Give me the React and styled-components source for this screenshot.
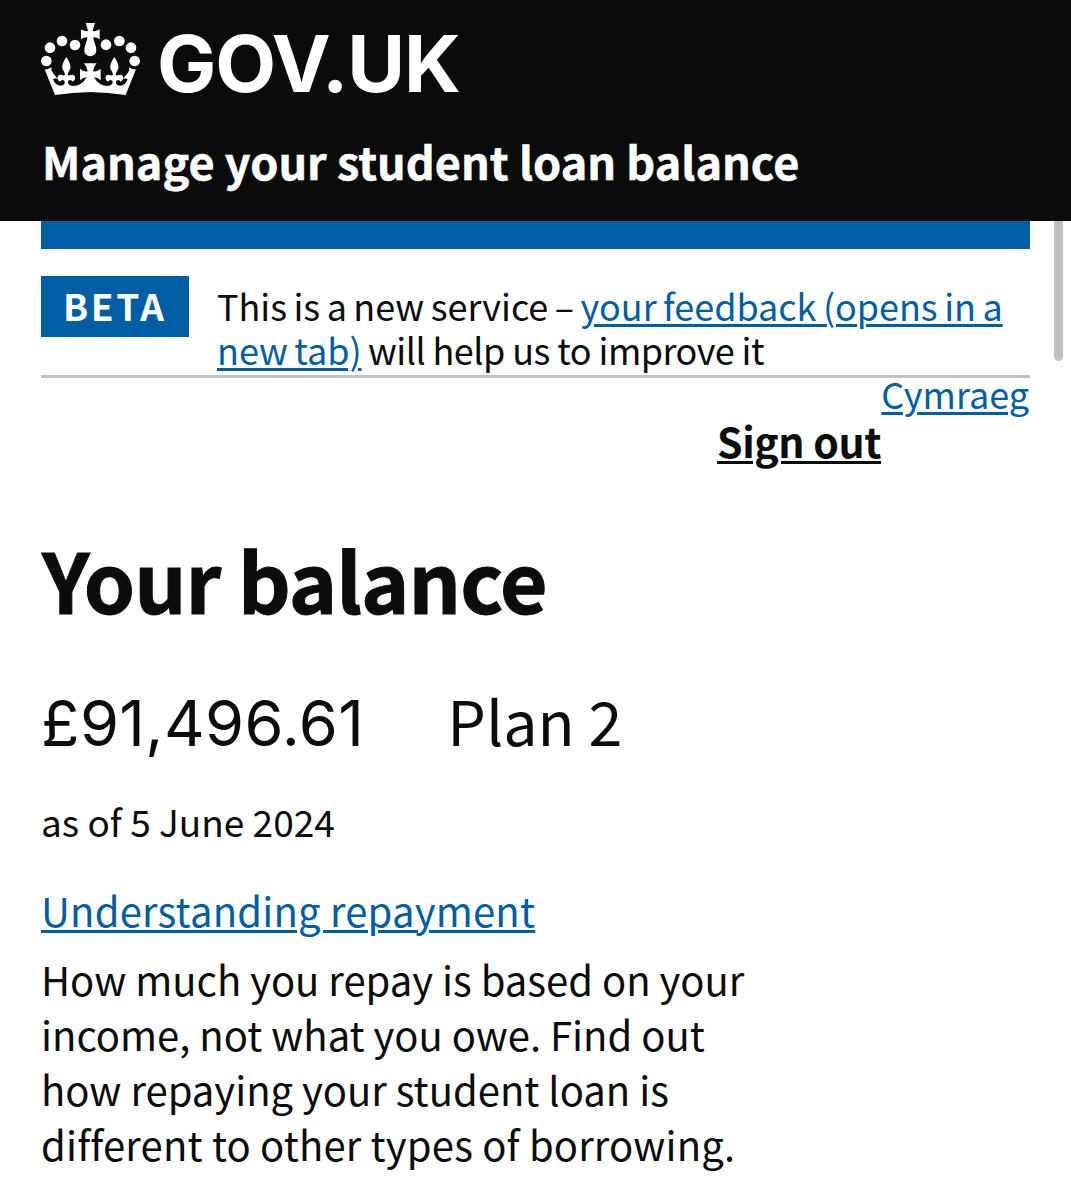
import styled, { createGlobalStyle } from "styled-components";

const GlobalStyle = createGlobalStyle`
  * {
    box-sizing: border-box;
  }
  body {
    margin: 0;
    background: #ffffff;
    color: #0b0c0c;
    font-family: "Noto Sans CJK SC", "Noto Sans", sans-serif;
    font-size: 40px;
    line-height: 55px;
    font-variant-ligatures: none;
  }
  h1, p {
    margin: 0;
  }
`;

const Page = styled.div`
  position: relative;
  height: 1200px;
  overflow: hidden;
`;

const Header = styled.header`
  height: 221px;
  padding: 22px 41px 0;
  background: #0b0b0b;
  color: #ffffff;
`;

const Logo = styled.div`
  display: flex;
  gap: 17px;
  height: 80px;
`;

const CrownIcon = styled.svg`
  display: block;
  width: 99px;
  height: 74px;
`;

const LogoText = styled.span`
  font-family: Inter, sans-serif;
  font-size: 79px;
  font-weight: 700;
  line-height: 83px;
  letter-spacing: -1.1px;
`;

const ServiceName = styled.p`
  padding: 28px 0 0 1px;
  font-size: 45px;
  font-weight: 700;
  line-height: 61px;
  white-space: nowrap;
  -webkit-text-stroke: 0.5px currentColor;
`;

const Scrollbar = styled.div`
  position: absolute;
  top: 221px;
  right: 8px;
  width: 9px;
  height: 140px;
  border-radius: 0 0 5px 5px;
  background: #c0c0c0;
`;

const Container = styled.div`
  margin: 0 41px;
`;

const BlueBar = styled.div`
  height: 28px;
  background: #005ea5;
`;

const PhaseBanner = styled.div`
  display: flex;
  align-items: flex-start;
  gap: 28px;
  height: 129px;
  padding-top: 27px;
  border-bottom: 3px solid #bfc1c3;
`;

const Tag = styled.strong`
  flex: none;
  width: 148px;
  height: 61px;
  padding-left: 22px;
  background: #005ea5;
  color: #ffffff;
  font-size: 37px;
  line-height: 58px;
  letter-spacing: 2.6px;
`;

const PhaseText = styled.p`
  padding-top: 7px;
  font-size: 36px;
  line-height: 44px;
  letter-spacing: -0.05px;
  word-spacing: -1.5px;
  white-space: nowrap;
`;

const Tight = styled.span`
  word-spacing: 0;
  letter-spacing: -0.55px;
`;

const Link = styled.a`
  color: ${(props) => (props.$dark ? "#0b0c0c" : "#005ea5")};
  font-weight: ${(props) => (props.$dark ? 700 : 400)};
  text-decoration: underline;
  text-decoration-thickness: 3px;
  text-underline-offset: 3px;
  letter-spacing: ${(props) => props.$spacing || "inherit"};
`;

const Language = styled.div`
  display: flex;
  justify-content: flex-end;
  height: 44px;
  padding-right: 1px;
  font-size: 36px;
  line-height: 31px;
`;

const SignOut = styled.div`
  display: flex;
  justify-content: flex-end;
  height: 60px;
  padding-right: 149px;
  font-size: 41px;
  line-height: 37px;
`;

const Heading = styled.h1`
  padding: 47px 0 0 1px;
  font-size: 82px;
  font-weight: 700;
  line-height: 100px;
  letter-spacing: -0.95px;
  -webkit-text-stroke: 1px currentColor;
`;

const Balance = styled.div`
  display: flex;
  align-items: baseline;
  gap: 83px;
  height: 134px;
  padding-top: 51px;
  font-size: 61px;
  line-height: 80px;
`;

const Amount = styled.span`
  font-family: Inter, sans-serif;
  font-size: 63px;
  letter-spacing: 0.4px;
`;

const AsOf = styled.p`
  padding-top: 33px;
  font-size: 37px;
  line-height: 50px;
`;

const Understanding = styled.p`
  padding-top: 37px;
`;

const Guidance = styled.p`
  width: 720px;
  padding-top: 14px;
  white-space: nowrap;
`;

const Loose = styled.span`
  letter-spacing: 0.17px;
`;

const Crown = () => (
  <CrownIcon viewBox="15 18 297 222" fill="#ffffff" aria-hidden="true">
    <circle cx="31" cy="135" r="16" />
    <circle cx="42" cy="95" r="16" />
    <circle cx="78" cy="75" r="16" />
    <circle cx="117" cy="87" r="16" />
    <circle cx="210" cy="86" r="16" />
    <circle cx="250" cy="75" r="16" />
    <circle cx="285" cy="95" r="16" />
    <circle cx="296" cy="135" r="16" />
    <path d="M149 21h28q-5 13-7 24 11 2 21-5v30q-9-7-19-6 0 9 4 17 5 12 5 22a18 18 0 0 1-36 0q0-10 5-22 4-8 4-17-10-1-19 6V40q10 7 21 5-2-11-7-24z" />
    <path id="crown-half" d="M26 160Q38 161 47 154L46 163Q51 174 65 188Q57 186 51 189Q57 209 76 209Q90 206 85 194Q77 189 72 197Q61 190 66 180Q71 173 80 178Q84 179 87 176Q86 168 79 158Q76 144 91 123Q106 144 103 158Q96 168 95 176Q98 179 102 178Q111 173 116 180Q121 190 110 197Q105 189 97 194Q92 206 110 210Q138 210 152 184Q141 184 132 193V158Q142 168 155 166Q154 154 144 142H164V228Q110 229 57 237Z" />
    <use href="#crown-half" transform="translate(326 0) scale(-1 1)" />
  </CrownIcon>
);

const App = () => {
  return (
    <>
      <GlobalStyle />
      <Page>
        <Header>
          <Logo>
            <Crown />
            <LogoText>GOV.UK</LogoText>
          </Logo>
          <ServiceName>Manage your student loan balance</ServiceName>
        </Header>
        <Scrollbar />
        <Container>
          <BlueBar />
          <PhaseBanner>
            <Tag>BETA</Tag>
            <PhaseText>
              This is a new service –{" "}
              <Link>
                your feedback (opens in a
                <br />
                new tab)
              </Link>{" "}
              <Tight>will help us to improve it</Tight>
            </PhaseText>
          </PhaseBanner>
          <Language>
            <Link>Cymraeg</Link>
          </Language>
          <SignOut>
            <Link $dark $spacing="-0.4px">
              Sign out
            </Link>
          </SignOut>
          <Heading>Your balance</Heading>
          <Balance>
            <Amount>£91,496.61</Amount>
            <span>Plan 2</span>
          </Balance>
          <AsOf>as of 5 June 2024</AsOf>
          <Understanding>
            <Link $spacing="0.2px">Understanding repayment</Link>
          </Understanding>
          <Guidance>
            How much you repay is based on your
            <br />
            income, not what you owe. Find out
            <br />
            how repaying your student loan is
            <br />
            <Loose>different to other types of borrowing.</Loose>
          </Guidance>
        </Container>
      </Page>
    </>
  );
};

export default App;
